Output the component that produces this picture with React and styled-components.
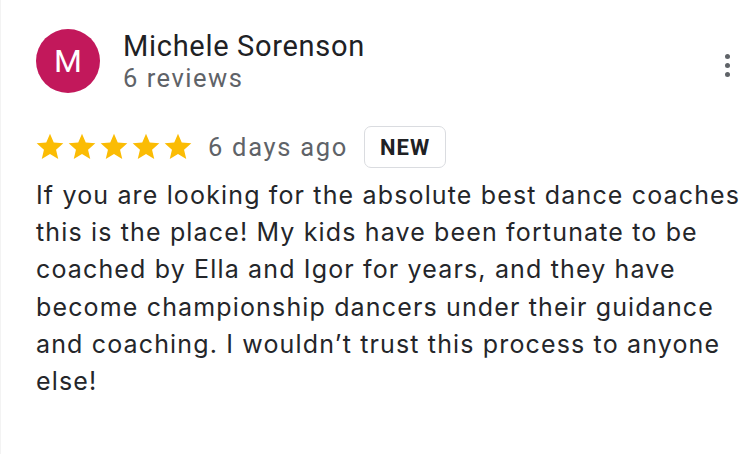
import React from 'react'
import styled, { createGlobalStyle } from 'styled-components'

const Global = createGlobalStyle`
  html, body {
    margin: 0;
    padding: 0;
    background: #fff;
  }
  body {
    font-family: Roboto, "Noto Sans", Arial, sans-serif;
  }
`

const Card = styled.div`
  width: 756px;
  height: 454px;
  box-sizing: border-box;
  padding: 29px 0 0 35px;
  border-left: 1px solid #f3f3f3;
  background: #fff;
  overflow: hidden;
`

const Header = styled.div`
  display: flex;
  align-items: flex-start;
`

const Avatar = styled.div`
  width: 64px;
  height: 64px;
  border-radius: 50%;
  background: ${p => p.color};
  color: #fff;
  display: flex;
  align-items: center;
  justify-content: center;
  font-size: 32px;
  flex-shrink: 0;
`

const Who = styled.div`
  display: flex;
  flex-direction: column;
  margin-left: 23px;
  flex: 1;
`

const Name = styled.div`
  font-size: 29px;
  line-height: 34px;
  letter-spacing: 0.7px;
  color: #202124;
`

const Count = styled.div`
  font-size: 25.5px;
  line-height: 30px;
  letter-spacing: 1.5px;
  color: #5f6368;
`

const Menu = styled.button`
  border: none;
  background: none;
  padding: 0;
  margin-top: 24px;
  margin-right: 19px;
  width: 20px;
  height: 24px;
  display: flex;
  flex-direction: column;
  align-items: center;
  justify-content: center;
  gap: 4px;
`

const Dot = styled.span`
  width: 5px;
  height: 5px;
  border-radius: 50%;
  background: #5f6368;
`

const Meta = styled.div`
  display: flex;
  align-items: center;
  margin-top: 33px;
  height: 42px;
`

const Stars = styled.div`
  display: flex;
  margin-left: -2px;
`

const Ago = styled.span`
  font-size: 25.5px;
  letter-spacing: 1.7px;
  color: #5f6368;
  margin-left: 14px;
`

const Badge = styled.span`
  margin-left: 16px;
  box-sizing: border-box;
  height: 42px;
  padding: 0 15px;
  display: flex;
  align-items: center;
  border: 1.5px solid #dadce0;
  border-radius: 7px;
  font-size: 22px;
  font-weight: 700;
  letter-spacing: 1px;
  color: #202124;
`

const Body = styled.p`
  margin: 9px 0 0 0;
  font-family: Inter, Roboto, sans-serif;
  font-size: 25px;
  line-height: 37.2px;
  letter-spacing: 1.15px;
  color: #24262a;
`

function Star() {
  return (
    <svg width="32" height="32" viewBox="0 0 24 24">
      <path
        fill="#fbbc04"
        d="M12 17.27L18.18 21l-1.64-7.03L22 9.24l-7.19-.61L12 2 9.19 8.63 2 9.24l5.46 4.73L5.82 21z"
      />
    </svg>
  )
}

export default function App() {
  return (
    <>
      <Global />
      <Card>
        <Header>
          <Avatar color="#c2185b">M</Avatar>
          <Who>
            <Name>Michele Sorenson</Name>
            <Count>6 reviews</Count>
          </Who>
          <Menu aria-label="More">
            <Dot />
            <Dot />
            <Dot />
          </Menu>
        </Header>
        <Meta>
          <Stars>
            {[0, 1, 2, 3, 4].map(i => <Star key={i} />)}
          </Stars>
          <Ago>6 days ago</Ago>
          <Badge>NEW</Badge>
        </Meta>
        <Body>
          If you are looking for the absolute best dance coaches this is the place! My kids have been
          fortunate to be coached by Ella and Igor for years, and they have become championship dancers
          under their guidance and coaching. I wouldn’t trust this process to anyone else!
        </Body>
      </Card>
    </>
  )
}
